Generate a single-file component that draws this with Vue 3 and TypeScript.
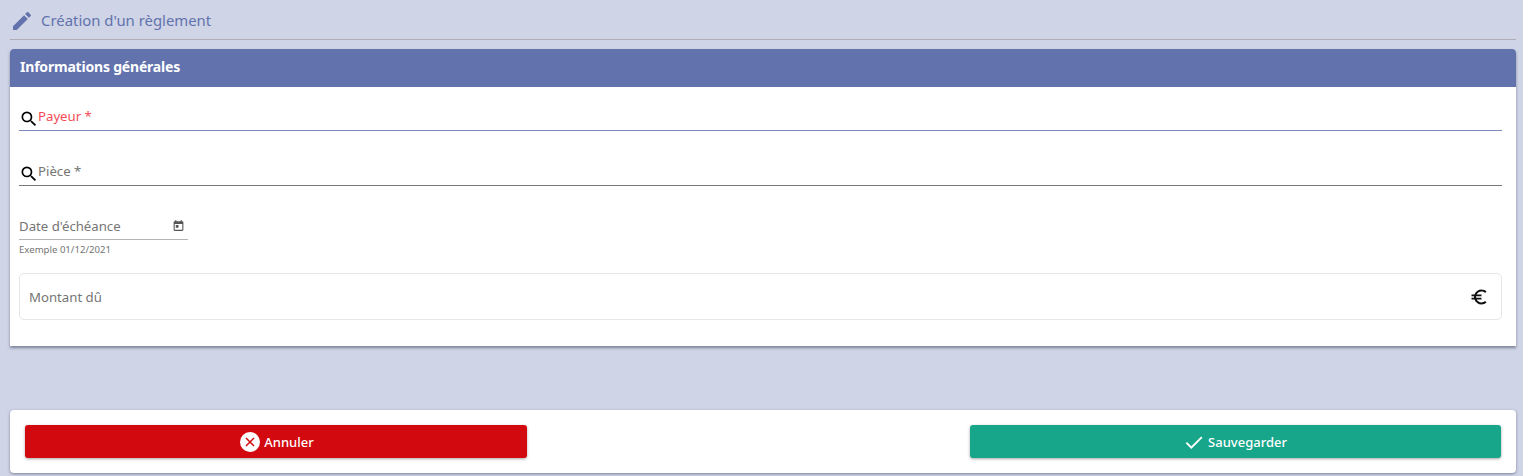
<script setup lang="ts">
const title = "Création d'un règlement"
</script>

<template>
  <div class="page">
    <div class="title">
      <svg class="pencil" viewBox="0 0 24 24"><path d="M3 17.25V21h3.75L17.81 9.94l-3.75-3.75L3 17.25zM20.71 7.04a1 1 0 0 0 0-1.41l-2.34-2.34a1 1 0 0 0-1.41 0l-1.83 1.83 3.75 3.75 1.83-1.83z" /></svg>
      <span>{{ title }}</span>
    </div>

    <section class="card">
      <h2 class="card-head">Informations générales</h2>
      <div class="card-body">
        <div class="search-field active">
          <svg class="search" viewBox="0 0 24 24"><path d="M15.5 14h-.79l-.28-.27A6.47 6.47 0 0 0 16 9.5 6.5 6.5 0 1 0 9.5 16c1.61 0 3.09-.59 4.23-1.57l.27.28v.79l5 4.99L20.49 19l-4.99-5zm-6 0C7.01 14 5 11.99 5 9.5S7.01 5 9.5 5 14 7.01 14 9.5 11.99 14 9.5 14z" /></svg>
          <span>Payeur *</span>
        </div>
        <div class="search-field">
          <svg class="search" viewBox="0 0 24 24"><path d="M15.5 14h-.79l-.28-.27A6.47 6.47 0 0 0 16 9.5 6.5 6.5 0 1 0 9.5 16c1.61 0 3.09-.59 4.23-1.57l.27.28v.79l5 4.99L20.49 19l-4.99-5zm-6 0C7.01 14 5 11.99 5 9.5S7.01 5 9.5 5 14 7.01 14 9.5 11.99 14 9.5 14z" /></svg>
          <span>Pièce *</span>
        </div>
        <div class="date-field">
          <div class="date-input">
            <span>Date d'échéance</span>
            <svg class="calendar" viewBox="0 0 24 24"><path d="M19 4h-1V2h-2v2H8V2H6v2H5a2 2 0 0 0-2 2v14a2 2 0 0 0 2 2h14a2 2 0 0 0 2-2V6a2 2 0 0 0-2-2zm0 16H5V9h14v11zM7 11h5v5H7z" /></svg>
          </div>
          <div class="hint">Exemple 01/12/2021</div>
        </div>
        <div class="amount">
          <span>Montant dû</span>
          <svg class="euro" viewBox="0 0 24 24"><path d="M15 18.5c-2.51 0-4.68-1.42-5.76-3.5H15v-2H8.58c-.05-.33-.08-.66-.08-1s.03-.67.08-1H15V9H9.24C10.32 6.92 12.5 5.5 15 5.5c1.61 0 3.09.59 4.23 1.57L21 5.3C19.41 3.87 17.3 3 15 3c-3.92 0-7.24 2.51-8.48 6H3v2h3.06c-.04.33-.06.66-.06 1s.02.67.06 1H3v2h3.52c1.24 3.49 4.56 6 8.48 6 2.31 0 4.41-.87 6-2.3l-1.78-1.77c-1.13.98-2.6 1.57-4.22 1.57z" /></svg>
        </div>
      </div>
    </section>

    <footer class="actions">
      <button class="btn cancel">
        <svg class="cancel-icon" viewBox="0 0 20 20">
          <circle cx="10" cy="10" r="10" fill="#fff" />
          <path d="M6 6l8 8M14 6l-8 8" stroke="#d2090e" stroke-width="1.5" fill="none" />
        </svg>
        Annuler
      </button>
      <button class="btn save">
        <svg class="check" viewBox="0 0 24 24"><path d="M2 13.5l1.6-1.6 5.2 5.2L20.6 5.3 22.2 6.9 8.8 20.3z" /></svg>
        Sauvegarder
      </button>
    </footer>
  </div>
</template>

<style scoped>
.page {
  height: 476px;
  box-sizing: border-box;
  padding: 0 7px 0 10px;
  background: #cfd5e6;
  font-family: "Noto Sans", sans-serif;
  overflow: hidden;
}

.title {
  height: 39px;
  display: flex;
  align-items: center;
  gap: 7px;
  border-bottom: 1px solid #aeaeb4;
  color: #6272ad;
  font-size: 14.9px;
}

.pencil {
  width: 24px;
  height: 24px;
  fill: #6272ad;
  position: relative;
  top: 1px;
}

.card {
  margin-top: 9px;
  height: 297px;
  background: #fff;
  border-radius: 4px 4px 0 0;
  box-shadow: 0 2px 3px rgba(70, 75, 100, 0.6);
}

.card-head {
  margin: 0;
  height: 38px;
  box-sizing: border-box;
  padding: 0 10px 3px;
  display: flex;
  align-items: center;
  background: #6272ad;
  border-radius: 4px 4px 0 0;
  color: #fff;
  font-size: 14px;
  font-weight: 700;
  letter-spacing: -0.2px;
}

.card-body {
  padding: 0 14px 0 9px;
}

.search-field {
  height: 44px;
  box-sizing: border-box;
  display: flex;
  align-items: center;
  padding-top: 13px;
  margin-bottom: 11px;
  border-bottom: 1px solid #777;
  color: #757575;
  font-size: 13.2px;
}

.search-field span {
  position: relative;
  top: 1px;
}

.search-field.active {
  border-bottom: 1px solid #7d88bb;
  color: #f44a55;
}

.search {
  width: 20px;
  height: 20px;
  margin-right: -1px;
  flex: none;
  position: relative;
  top: 4px;
}

.date-field {
  width: 169px;
  margin-top: 18px;
}

.date-input {
  height: 36px;
  box-sizing: border-box;
  display: flex;
  align-items: center;
  justify-content: space-between;
  padding: 9px 3px 0 0;
  border-bottom: 1px solid #b5b5b5;
  color: #757575;
  font-size: 13.2px;
}

.calendar {
  width: 13px;
  height: 13px;
  fill: #555;
  margin-top: -2px;
}

.hint {
  margin-top: 3px;
  color: #757575;
  font-size: 9.6px;
  line-height: 13px;
}

.amount {
  margin-top: 17px;
  height: 47px;
  box-sizing: border-box;
  padding: 0 12px 0 9px;
  display: flex;
  align-items: center;
  justify-content: space-between;
  border: 1px solid #e6e6e6;
  border-radius: 5px;
  color: #757575;
  font-size: 13.2px;
}

.euro {
  width: 20px;
  height: 20px;
  fill: #111;
}

.actions {
  margin-top: 64px;
  height: 63px;
  box-sizing: border-box;
  padding: 15px 15px;
  display: flex;
  justify-content: space-between;
  background: #fff;
  border-radius: 4px;
  box-shadow: 0 1px 3px rgba(70, 75, 100, 0.6);
}

.btn {
  height: 33px;
  border: 0;
  border-radius: 3px;
  display: flex;
  align-items: center;
  justify-content: center;
  gap: 4px;
  color: #fff;
  font-family: inherit;
  font-size: 13px;
  font-weight: 500;
  box-shadow: 0 1px 3px rgba(0, 0, 0, 0.35);
}

.cancel {
  width: 502px;
  padding-left: 8px;
  background: #d2090e;
}

.save {
  width: 531px;
  background: #17a689;
}

.cancel-icon {
  width: 20px;
  height: 20px;
}

.check {
  width: 20px;
  height: 20px;
  fill: #fff;
}
</style>
